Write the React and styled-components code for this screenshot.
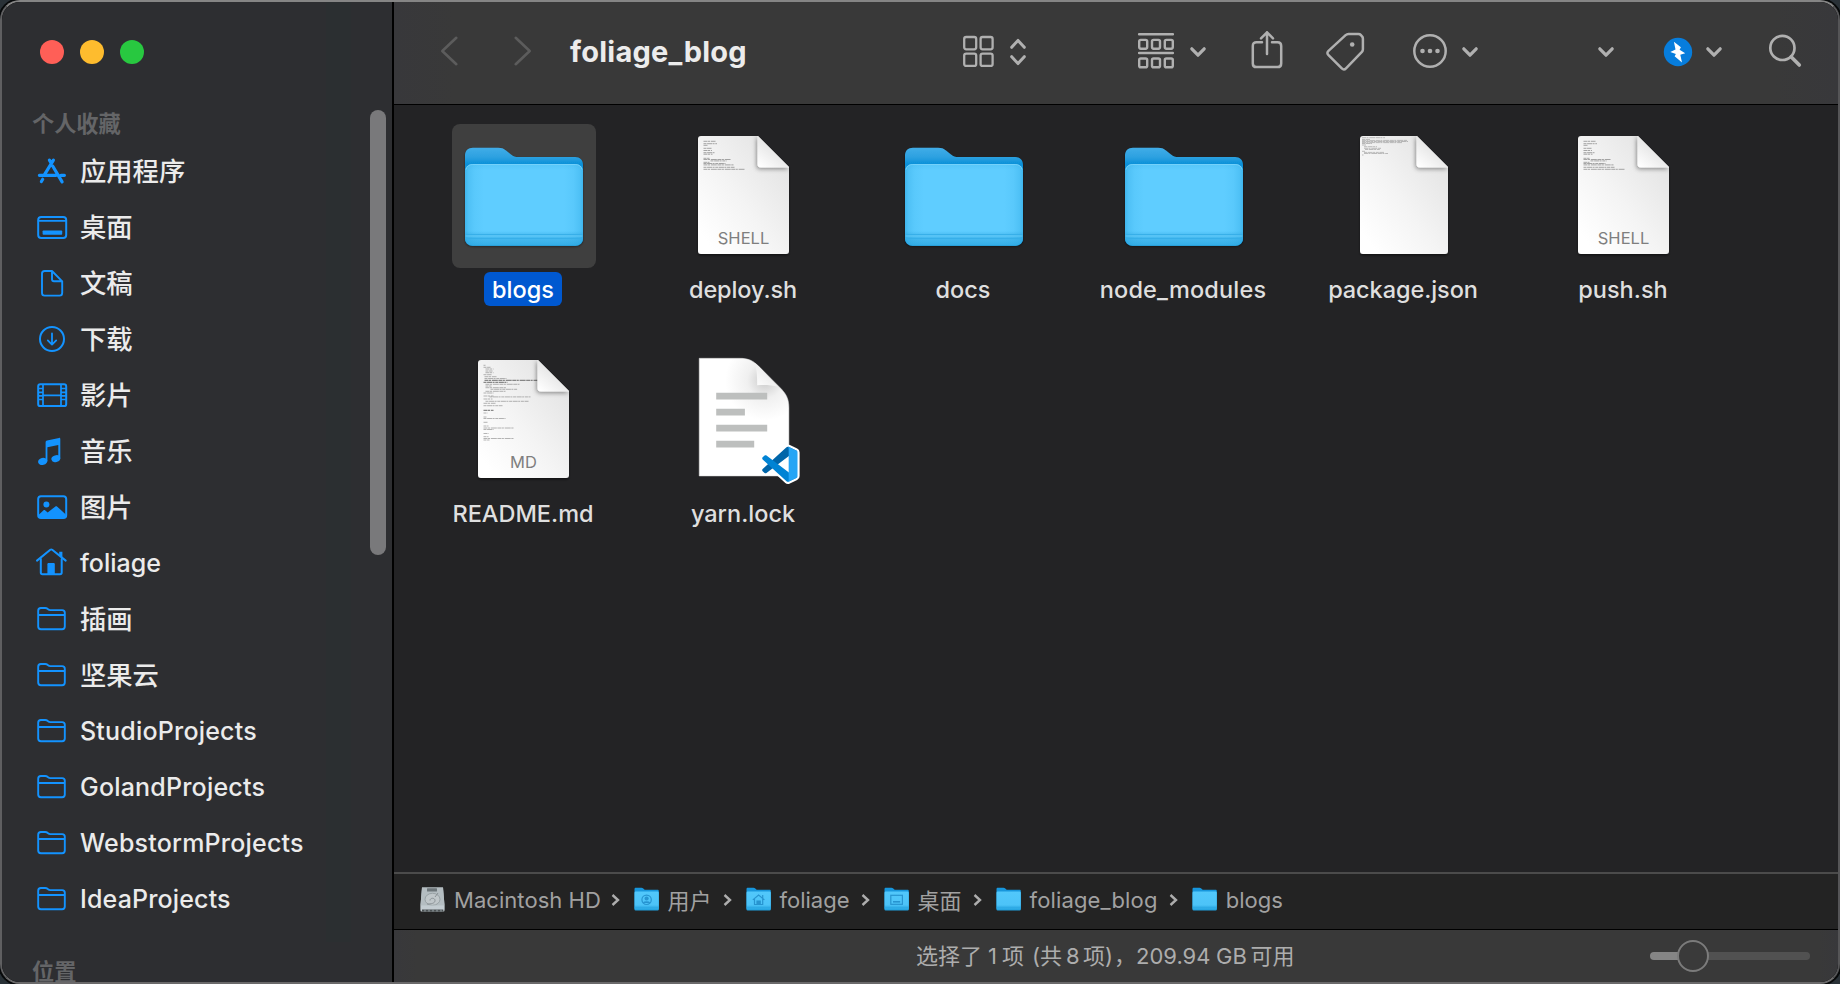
import React from "react";
import styled, { createGlobalStyle, css } from "styled-components";

const Global = createGlobalStyle`
  * { box-sizing: border-box; }
  body { margin: 0; background: #293137; overflow: hidden; }
`;

const Window = styled.div`
  width: 1840px;
  height: 984px;
  display: flex;
  overflow: hidden;
  border: 2px solid;
  border-color: #858585 #555557 #6a696a #5f5f61;
  border-radius: 20px;
  background: #000;
  box-shadow: 0 0 0 2px #07090a;
  font-family: Inter, "Noto Sans CJK SC", sans-serif;
  color: #ebebeb;
`;

/* ---------- sidebar ---------- */

const Sidebar = styled.aside`
  position: relative;
  flex: none;
  width: 390px;
  height: 980px;
  overflow: hidden;
  background: linear-gradient(#2b2f31, #2b2f31) 324px 0 / 25px 940px no-repeat, #2d2e31;
`;

const TrafficLights = styled.div`
  display: flex;
  gap: 16px;
  padding: 38px 0 0 38px;
  height: 104px;
`;

const Light = styled.span`
  width: 24px;
  height: 24px;
  border-radius: 50%;
  background: ${(p) => p.$color};
`;

const Heading = styled.div`
  height: 36px;
  line-height: 36px;
  padding-left: 30px;
  font-size: 22.2px;
  font-weight: 700;
  color: #646567;
`;

const SidebarList = styled.ul`
  list-style: none;
  margin: 0 0 27px;
  padding: 1px 0 0;
`;

const SidebarItem = styled.li`
  display: flex;
  align-items: center;
  gap: 12px;
  height: 56px;
  padding-left: 35px;
  font-size: 25px;
  font-weight: 500;
  letter-spacing: ${(p) => p.$ls || 0}px;
  color: #ebebeb;
  white-space: nowrap;

  svg { flex: none; overflow: visible; }
`;

const CjkText = styled.span`
  padding-bottom: 4px;
  font-size: 26.3px;
`;

const Scrollbar = styled.div`
  position: absolute;
  top: 108px;
  left: 368px;
  width: 16px;
  height: 445px;
  border-radius: 8px;
  background: #79797b;
`;

const BLUE = "#1393ff";

const SideSvg = ({ children }) => (
  <svg width="31" height="28" viewBox="0 0 31 28" fill="none" stroke={BLUE} strokeWidth="2" strokeLinecap="round" strokeLinejoin="round">
    {children}
  </svg>
);

const icons = {
  apps: (
    <SideSvg>
      <g strokeWidth="3.2">
        <path d="M16.4 3.2 7.2 18.2M12.4 3.2l1.5 2.4M15.8 9.3l9.3 15.6M2.4 18.3H19M24 18.3h3.4M4.4 24.5l1.3-2.2" />
      </g>
    </SideSvg>
  ),
  desktop: (
    <SideSvg>
      <rect x="1.2" y="4" width="28" height="21" rx="3" />
      <path d="M1.5 7.9h27.4" strokeWidth="1.6" />
      <rect x="5.6" y="17.5" width="19.6" height="4.3" rx="0.8" fill={BLUE} stroke="none" />
    </SideSvg>
  ),
  document: (
    <SideSvg>
      <path d="M15 2H7.6C6 2 5 3 5 4.6v19.4c0 1.6 1 2.6 2.6 2.6h15c1.6 0 2.6-1 2.6-2.6V12.3zM15 2v8.3c0 1.200.8 2 2 2h8.2" strokeWidth="1.9" />
    </SideSvg>
  ),
  download: (
    <SideSvg>
      <circle cx="15" cy="14" r="12" />
      <path d="M15 8.5v11M10.8 15.4 15 19.6l4.200-4.200" strokeWidth="1.8" />
    </SideSvg>
  ),
  film: (
    <SideSvg>
      <rect x="1.2" y="3.3" width="28" height="21.8" rx="2.2" />
      <path d="M6 3.5v21.400M24 3.5v21.400M6 14.3h18M1.2 7.5H6M1.2 11.3H6M1.2 14.8H6M1.2 18.5H6M24 7.5h5M24 11.3h5M24 14.8h5M24 18.5h5" strokeWidth="1.7" strokeLinecap="butt" />
    </SideSvg>
  ),
  music: (
    <SideSvg>
      <path d="M8.6 24.2V5.2c0-1 .5-1.6 1.5-1.8L22 .9c.8-.2 1.3.2 1.3 1v19.8h-2V8L10.4 10.3v13.9z" fill={BLUE} stroke="none" />
      <ellipse cx="5.7" cy="24.4" rx="4.7" ry="3.5" fill={BLUE} stroke="none" transform="rotate(-15 5.7 24.4)" />
      <ellipse cx="18.8" cy="21.7" rx="4.5" ry="3.4" fill={BLUE} stroke="none" transform="rotate(-15 18.8 21.7)" />
    </SideSvg>
  ),
  photo: (
    <SideSvg>
      <rect x="1.2" y="3.3" width="28" height="21.8" rx="2.8" />
      <circle cx="9.4" cy="11.4" r="3" fill={BLUE} stroke="none" />
      <path d="M2 21.5 6.3 17.5c.7-.6 1.3-.6 2 0l2.4 1.9 7.4-5.700c.8-.6 1.4-.6 2.200 0l8.500 7.800v3H2z" fill={BLUE} stroke="none" />
    </SideSvg>
  ),
  home: (
    <SideSvg>
      <path d="M0 11.6 13.3.8c.7-.5 1.2-.5 1.9 0L28.7 11.6" />
      <path d="M3.8 10v13.6c0 1 .7 1.7 1.7 1.7h17.500c1 0 1.7-.7 1.7-1.700V10" />
      <path d="M10.4 25.5V15.3c0-.7.5-1.2 1.2-1.200h5c.7 0 1.2.5 1.2 1.200v10.200z" fill={BLUE} stroke="none" />
      <path d="M22.2 2.7h3.200V9.300l-3.200-2.600z" fill={BLUE} stroke="none" />
    </SideSvg>
  ),
  folder: (
    <SideSvg>
      <path d="M1.2 21.5V5.7C1.2 4 2.2 3 3.9 3h4.3c1 0 1.6.2 2.3.8l.9.7c.6.5 1 .6 1.8.6h11.9c1.7 0 2.7 1 2.7 2.7v13.7c0 1.7-1 2.7-2.7 2.7H3.9c-1.7 0-2.7-1-2.7-2.7zM1.5 10h26.1" strokeWidth="1.9" />
    </SideSvg>
  ),
};

const favorites = [
  { icon: "apps", text: "应用程序", cjk: true },
  { icon: "desktop", text: "桌面", cjk: true },
  { icon: "document", text: "文稿", cjk: true },
  { icon: "download", text: "下载", cjk: true },
  { icon: "film", text: "影片", cjk: true },
  { icon: "music", text: "音乐", cjk: true },
  { icon: "photo", text: "图片", cjk: true },
  { icon: "home", text: "foliage" },
  { icon: "folder", text: "插画", cjk: true },
  { icon: "folder", text: "坚果云", cjk: true },
  { icon: "folder", text: "StudioProjects", ls: 0.2 },
  { icon: "folder", text: "GolandProjects", ls: 0.2 },
  { icon: "folder", text: "WebstormProjects", ls: 0.2 },
  { icon: "folder", text: "IdeaProjects", ls: 0.15 },
];

/* ---------- toolbar ---------- */

const Main = styled.main`
  display: flex;
  flex-direction: column;
  flex: 1;
  min-width: 0;
  margin-left: 2px;
`;

const Toolbar = styled.header`
  display: flex;
  align-items: center;
  flex: none;
  height: 102px;
  padding-bottom: 4px;
  background: linear-gradient(90deg, #38383b 0, #393939 60px, #393939 1380px, #38383b 1444px);

  svg { flex: none; overflow: visible; }
`;

const Title = styled.h1`
  margin: 0 0 0 38px;
  padding-top: 2px;
  width: 393px;
  font-size: 29px;
  font-weight: 700;
  line-height: 36px;
  letter-spacing: 0.25px;
  color: #ececec;
`;

const ToolSlot = styled.div`
  display: flex;
  margin-left: ${(p) => p.$gap}px;
`;

const ToolSvg = ({ w, h = 40, color = "#b0b0b0", sw = 2.5, children }) => (
  <svg width={w} height={h} viewBox={`0 0 ${w} ${h}`} fill="none" stroke={color} strokeWidth={sw} strokeLinecap="round" strokeLinejoin="round">
    {children}
  </svg>
);

const Chevron = () => (
  <ToolSvg w={16} sw={3.2}>
    <path d="M1.8 17.8 8 24.2l6.200-6.400" />
  </ToolSvg>
);

/* ---------- file grid ---------- */

const Content = styled.section`
  flex: none;
  height: 768px;
  border-top: 1px solid #000;
  padding: 19px 0 0 20px;
  display: grid;
  grid-template-columns: repeat(6, 220px);
  grid-auto-rows: 224px;
  background: #232325;
`;

const FileCell = styled.figure`
  margin: 0;
  display: flex;
  flex-direction: column;
  align-items: center;
`;

const Thumb = styled.div`
  width: 144px;
  height: 144px;
  border-radius: 8px;
  background: ${(p) => (p.$selected ? "#3f3f3f" : "transparent")};
  svg { display: block; overflow: visible; }
`;

const FileName = styled.figcaption`
  height: 34px;
  margin-top: 4px;
  margin-right: 2px;
  padding: 0 8px;
  line-height: 36px;
  border-radius: 6px;
  font-size: 23.5px;
  font-weight: 500;
  letter-spacing: ${(p) => p.$ls || 0}px;
  white-space: nowrap;
  color: #dfdfdf;
  ${(p) => p.$selected && css`background: #0058d0; color: #fff;`}
`;

const DocLabel = styled.text`
  font-family: Inter, sans-serif;
  font-size: 16.5px;
  fill: #7f7f7f;
`;

const FolderThumb = () => (
  <svg width="144" height="144" viewBox="0 0 144 144">
    <defs>
      <linearGradient id="fBack" x1="0" y1="0" x2="0" y2="1">
        <stop offset="0" stopColor="#41ade8" />
        <stop offset="0.1" stopColor="#2ba0e0" />
        <stop offset="0.17" stopColor="#0890d8" />
        <stop offset="1" stopColor="#0890d8" />
      </linearGradient>
      <linearGradient id="fFront" x1="0" y1="0" x2="0" y2="1">
        <stop offset="0" stopColor="#56c6f8" />
        <stop offset="0.08" stopColor="#5fcdff" />
        <stop offset="0.82" stopColor="#5fcdff" />
        <stop offset="0.86" stopColor="#4fc0f5" />
        <stop offset="1" stopColor="#34ade6" />
      </linearGradient>
      <linearGradient id="fSides" x1="0" y1="0" x2="1" y2="0">
        <stop offset="0" stopColor="#1f9edb" stopOpacity="0.5" />
        <stop offset="0.03" stopColor="#1f9edb" stopOpacity="0.25" />
        <stop offset="0.08" stopColor="#1f9edb" stopOpacity="0.09" />
        <stop offset="0.16" stopColor="#1f9edb" stopOpacity="0" />
        <stop offset="0.84" stopColor="#1f9edb" stopOpacity="0" />
        <stop offset="0.92" stopColor="#1f9edb" stopOpacity="0.09" />
        <stop offset="0.97" stopColor="#1f9edb" stopOpacity="0.25" />
        <stop offset="1" stopColor="#1f9edb" stopOpacity="0.5" />
      </linearGradient>
      <filter id="fShadow" x="-10%" y="-10%" width="120%" height="125%">
        <feDropShadow dx="0" dy="1" stdDeviation="1" floodColor="#000" floodOpacity="0.45" />
      </filter>
    </defs>
    <path filter="url(#fShadow)" fill="url(#fBack)" d="M13 114V32c0-5.500 3-8.300 8-8.300h25c3.500 0 5.500.7 8 2.800l5 4c2.500 2 4 2.500 7.500 2.500H123c5 0 8 3 8 8v73c0 5-3 7.700-8 7.700H21c-5 0-8-2.700-8-7.700z" />
    <rect x="13" y="40" width="118" height="81.7" rx="7.5" fill="url(#fFront)" />
    <rect x="13" y="40" width="118" height="81.7" rx="7.5" fill="url(#fSides)" />
    <path d="M14 45.500c.5-3 3-5 6.500-5h103c3.500 0 6 2 6.500 5" fill="none" stroke="#7bd4fb" strokeWidth="0.8" />
    <path d="M13.500 110.500h117M13.500 114.500h117" stroke="#36aee8" strokeWidth="0.9" />
    <path d="M13.500 112h117" stroke="#6fd0fa" strokeWidth="0.7" />
  </svg>
);

/* each line of the preview: [y, indent, length, dark] */
const shellLines = [
  [5.3, 0, 12], [7.7, 0, 13.5], [9.3, 0, 4], [12.3, 0, 8], [14.5, 0, 8.5], [16.7, 0, 11], [18.2, 0, 9],
  [22.3, 0, 6], [23.5, 0, 27], [24.9, 7, 16], [26.3, 0, 6], [27.5, 0, 22], [28.9, 0, 30], [31.3, 0, 31], [33.3, 0, 41],
];
const readmeLines = [
  [5.3, 0, 2], [7.3, 0, 7], [9, 2, 8], [11, 2, 7], [12.7, 2, 8], [14.7, 0, 8], [16.7, 1, 12], [18.5, 1, 22],
  [20.3, 1, 53, 1], [22.3, 0, 24, 1], [24.3, 2, 34], [26, 2, 6], [27.7, 2, 21], [29.3, 7, 27], [31.3, 2, 20], [33, 0, 10],
  [36, 0, 10], [36.9, 6, 41], [39, 0, 9], [41.3, 2, 43], [43.3, 0, 12], [45.7, 0, 19], [50.3, 0, 10, 1], [53, 0, 4],
  [57, 0, 3], [58.5, 0, 22], [62.3, 0, 4], [66, 0, 5], [68, 0, 30], [69.5, 0, 10], [73.5, 0, 5], [76.7, 0, 5], [78.5, 0, 30], [80, 0, 6],
];
const packageLines = [
  [1.7, 0, 23], [3.4, 0, 8], [4.4, 0, 45], [5.5, 0, 46], [6.6, 0, 40], [7.5, 0, 10], [9, 0, 4], [10.7, 2, 13],
  [12.3, 2, 17], [13.5, 3, 15], [15.3, 0, 3], [16.4, 2, 20], [17.5, 2, 24], [19, 0, 1.5],
];

const DocThumb = ({ x = 26, w = 91, label, lines, textX = 5.5, ink = 0.7 }) => {
  const id = `d${label || "plain"}`;
  const sheet = `M3 0H${w - 31}L${w} 31V115c0 2-1 3-3 3H3c-2 0-3-1-3-3V3C0 1 1 0 3 0z`;
  return (
    <svg width="144" height="144" viewBox="0 0 144 144">
      <defs>
        <linearGradient id={`${id}p`} x1="1" y1="0.2" x2="0.2" y2="1">
          <stop offset="0" stopColor="#e3e3e3" />
          <stop offset="0.55" stopColor="#f4f4f4" />
          <stop offset="1" stopColor="#ffffff" />
        </linearGradient>
        <linearGradient id={`${id}f`} x1="0.1" y1="1" x2="0.55" y2="0.45">
          <stop offset="0" stopColor="#ffffff" />
          <stop offset="1" stopColor="#e6e6e6" />
        </linearGradient>
        <filter id={`${id}s`} x="-30%" y="-30%" width="160%" height="160%">
          <feDropShadow dx="-1" dy="1.5" stdDeviation="2.2" floodColor="#000" floodOpacity="0.42" />
        </filter>
        <filter id={`${id}o`} x="-10%" y="-10%" width="120%" height="120%">
          <feDropShadow dx="0" dy="1.5" stdDeviation="1.2" floodColor="#000" floodOpacity="0.5" />
        </filter>
        <clipPath id={`${id}c`}>
          <path d={sheet} />
        </clipPath>
      </defs>
      <g transform={`translate(${x} 12)`}>
        <path filter={`url(#${id}o)`} fill={`url(#${id}p)`} d={sheet} />
        {lines.map(([y, indent, len, dark], i) => (
          <path key={i} d={`M${textX + indent} ${y}h${len}`} stroke={dark ? "#444" : "#6e6e6e"} strokeWidth="0.85" strokeOpacity={dark ? 0.9 : ink} strokeDasharray={i % 2 ? "3 .6 5 .5 2 .7" : "4 .5 2 .8 6 .6"} />
        ))}
        <g clipPath={`url(#${id}c)`}>
          <path filter={`url(#${id}s)`} fill={`url(#${id}f)`} d={`M${w - 31.5} -1V28c0 2.400 1 3.500 3.500 3.500H${w + 1}z`} />
        </g>
        {label && <DocLabel x={w / 2} y="108.3" textAnchor="middle">{label}</DocLabel>}
      </g>
    </svg>
  );
};

const VS_BACK = "M96.4614 10.7962L75.8569 0.875542C73.4719 -0.272773 70.6217 0.211611 68.75 2.08333L1.29858 63.5832C-0.515693 65.2373 -0.513607 68.0937 1.30308 69.7452L6.81272 74.754C8.29793 76.1042 10.5347 76.2036 12.1338 74.9905L93.3609 13.3699C96.086 11.3026 100 13.2462 100 16.6667V16.4275C100 14.0265 98.6246 11.8378 96.4614 10.7962Z";
const VS_MID = "M96.4614 89.2038L75.8569 99.1245C73.4719 100.273 70.6217 99.7884 68.75 97.9167L1.29858 36.4169C-0.515693 34.7627 -0.513607 31.9063 1.30308 30.2548L6.81272 25.246C8.29793 23.8958 10.5347 23.7964 12.1338 25.0095L93.3609 86.6301C96.086 88.6974 100 86.7538 100 83.3333V83.5725C100 85.9735 98.6246 88.1622 96.4614 89.2038Z";
const VS_FRONT = "M75.8578 99.1263C73.4721 100.274 70.6219 99.7885 68.75 97.9166C71.0564 100.223 75 98.5895 75 95.3278V4.67213C75 1.41039 71.0564 -0.223106 68.75 2.08329C70.6219 0.211402 73.4721 -0.273666 75.8578 0.873633L96.4587 10.7807C98.6234 11.8217 100 14.0112 100 16.4132V83.5871C100 85.9891 98.6234 88.1786 96.4587 89.2196L75.8578 99.1263Z";

const LockThumb = () => (
  <svg width="144" height="144" viewBox="0 0 144 144">
    <defs>
      <linearGradient id="lkFold" x1="0" y1="1" x2="0.6" y2="0.4">
        <stop offset="0" stopColor="#fff" />
        <stop offset="1" stopColor="#ececec" />
      </linearGradient>
      <radialGradient id="lkShade" gradientUnits="userSpaceOnUse" cx="66" cy="22" r="40">
        <stop offset="0" stopColor="#cacaca" />
        <stop offset="0.45" stopColor="#f0f0f0" />
        <stop offset="1" stopColor="#fff" />
      </radialGradient>
    </defs>
    <g transform="translate(27.2 10.3)">
      <path d="M0 0H40C50 0 54 2.500 60 8.500L80 28.500C87 35.500 89.700 40 89.700 50V117.700H0z" fill="url(#lkShade)" stroke="#d8d8d8" strokeWidth="0.5" />
      <path d="M55 4.500C57.500 10 58 16 58 27 66 26.500 73 27 79 28.500L60 8.500C58 6.500 57 5.500 55 4.500z" fill="url(#lkFold)" />
      <path d="M17 34.500h51v6.700H17zM17 50.500h28.700v6.700H17zM17 66.500h51v6.700H17zM17 82.500h38v6.700H17z" fill="#bdbfbe" />
      <g transform="translate(63 88.3) scale(.353)">
        <path d={VS_BACK + VS_MID + VS_FRONT} fill="#fff" stroke="#fff" strokeWidth="12" strokeLinejoin="round" />
        <path d="M74 26 43 50l31 24z" fill="#fff" />
        <path d={VS_BACK} fill="#0065a9" />
        <path d={VS_MID} fill="#0083d4" />
        <path d={VS_FRONT} fill="#25a5f5" />
      </g>
    </g>
  </svg>
);

const files = [
  { name: "blogs", thumb: <FolderThumb />, selected: true },
  { name: "deploy.sh", thumb: <DocThumb label="SHELL" lines={shellLines} />, ls: -0.1 },
  { name: "docs", thumb: <FolderThumb /> },
  { name: "node_modules", thumb: <FolderThumb />, ls: 0.18 },
  { name: "package.json", thumb: <DocThumb x={28} w={88} textX={2} lines={packageLines} ink={0.5} />, ls: -0.07 },
  { name: "push.sh", thumb: <DocThumb label="SHELL" lines={shellLines} /> },
  { name: "README.md", thumb: <DocThumb label="MD" lines={readmeLines} ink={0.6} /> },
  { name: "yarn.lock", thumb: <LockThumb /> },
];

/* ---------- path bar and status bar ---------- */

const PathBar = styled.nav`
  flex: none;
  display: flex;
  align-items: center;
  height: 57px;
  padding: 0 0 4px 26px;
  border-top: 2px solid #4b4b4b;
  background: #232323;
  font-size: 22px;
  color: #a1a1a1;
  svg { flex: none; }
`;

const PathStep = styled.span`
  display: flex;
  align-items: center;
  margin-right: 14px;
`;

const PathText = styled.span`
  width: ${(p) => p.$w}px;
  margin-left: 9px;
  padding-bottom: ${(p) => (p.$cjk ? 2 : 0)}px;
  letter-spacing: ${(p) => p.$ls || 0}px;
  white-space: nowrap;
`;

const PathArrow = () => (
  <svg width="9" height="14" viewBox="0 0 9 14" fill="none" stroke="#adadad" strokeWidth="2.4">
    <path d="M1.500 2 7 7l-5.500 5" />
  </svg>
);

const MARK = "#2794d0";

const MiniFolder = ({ mark }) => (
  <svg width="25" height="25" viewBox="0 0 25 25">
    <defs>
      <linearGradient id="mf" x1="0" y1="0" x2="0" y2="1">
        <stop offset="0" stopColor="#52c8fb" />
        <stop offset="0.7" stopColor="#4cc3f8" />
        <stop offset="1" stopColor="#1e9fdc" />
      </linearGradient>
    </defs>
    <path d="M.5 22V2.200C.5 1.300 1 .800 2 .800h5.500c.8 0 1.300.2 1.800.7l.8.800c.4.400.8.500 1.400.5h12c.9 0 1.300.5 1.300 1.400V22z" fill="#1796dc" />
    <rect x="0.5" y="4.5" width="24.3" height="19" rx="1.2" fill="url(#mf)" />
    <path d="M.7 20.300h24" stroke="#2ba6e2" strokeWidth="0.8" />
    {mark === "user" && (
      <g fill="none" stroke={MARK} strokeWidth="1.2">
        <circle cx="12.6" cy="12.8" r="4.7" />
        <circle cx="12.6" cy="11.5" r="1.5" fill={MARK} />
        <path d="M9.500 16c.8-1.500 5.400-1.500 6.200 0" fill={MARK} />
      </g>
    )}
    {mark === "home" && (
      <g fill="none" stroke={MARK} strokeWidth="1.2">
        <path d="M6.800 12.900 12.600 8l5.800 4.900M8.500 12v5.500h8.200V12M16.700 8v3" />
        <path d="M11 17.500V14h3.200v3.500z" fill={MARK} />
      </g>
    )}
    {mark === "desktop" && (
      <g fill="none" stroke={MARK} strokeWidth="1.2">
        <rect x="6.8" y="8.3" width="11.6" height="9" />
        <path d="M9 14.800h7.200" strokeWidth="1.6" />
      </g>
    )}
  </svg>
);

const DiskIcon = () => (
  <svg width="25" height="25" viewBox="0 0 25 25">
    <path d="M2 .500h21L24.500 18v5.500c0 .6-.4 1-1 1H1.500c-.6 0-1-.4-1-1V18z" fill="#b9c2c6" />
    <path d="M2 .500h21L24.500 18.500H.5z" fill="#b4bdc1" />
    <rect x="7" y="1.2" width="10" height="3.4" rx=".5" fill="#6d767a" />
    <ellipse cx="12.5" cy="12.3" rx="7.5" ry="6" fill="#c0c7ca" stroke="#8a9397" strokeWidth="0.7" />
    <path d="M10 13.500c0-3 5-3 5 0s-4 3.500-8 3.500M15 10l3-4" fill="none" stroke="#848c90" strokeWidth="0.9" />
    <path d="M.7 18.500h23.600v4.300H.7z" fill="#c3ccd1" />
    <path d="M2 22.500h21.300v2H2z" fill="#4a5052" />
    <path d="M5 22.500v2M9 22.500v2M13 22.500v2M17 22.500v2M21 22.500v2" stroke="#9ba6ab" strokeWidth="1" />
  </svg>
);

const steps = [
  { icon: <DiskIcon />, text: "Macintosh HD", w: 156.5, ls: 0.05 },
  { icon: <MiniFolder mark="user" />, text: "用户", w: 55, cjk: true },
  { icon: <MiniFolder mark="home" />, text: "foliage", w: 81 },
  { icon: <MiniFolder mark="desktop" />, text: "桌面", w: 55, cjk: true },
  { icon: <MiniFolder />, text: "foliage_blog", w: 139.2, ls: 0.15 },
  { icon: <MiniFolder />, text: "blogs", w: 60 },
];

const StatusBar = styled.footer`
  flex: 1;
  display: flex;
  align-items: center;
  border-top: 1px solid #000;
  padding: 0 28px 0 522px;
  background: linear-gradient(90deg, #38383b 0, #393939 24px, #393939 1425px, #38383b 1444px);
  color: #adadad;
  font-size: 22px;
`;

const StatusText = styled.div`
  display: flex;
  align-items: baseline;
  width: 734px;
  padding-bottom: 4px;
  white-space: nowrap;
`;

const StatusPart = styled.span`
  width: ${(p) => p.$w}px;
`;

const Slider = styled.div`
  display: flex;
  align-items: center;
  width: 160px;
  height: 8px;
  border-radius: 4px;
  background: linear-gradient(90deg, #858585 30px, #515151 30px);
`;

const Knob = styled.span`
  width: 32px;
  height: 32px;
  margin-left: 27px;
  border: 2px solid #7b7b7b;
  border-radius: 50%;
  background: #3a3a3a;
`;

export default function App() {
  return (
    <>
      <Global />
      <Window>
        <Sidebar>
          <TrafficLights>
            <Light $color="#ff5f57" />
            <Light $color="#febc2e" />
            <Light $color="#28c840" />
          </TrafficLights>
          <Heading>个人收藏</Heading>
          <SidebarList>
            {favorites.map((f) => (
              <SidebarItem key={f.text} $ls={f.ls}>
                {icons[f.icon]}
                {f.cjk ? <CjkText>{f.text}</CjkText> : <span>{f.text}</span>}
              </SidebarItem>
            ))}
          </SidebarList>
          <Heading>位置</Heading>
          <Scrollbar />
        </Sidebar>
        <Main>
          <Toolbar>
            <ToolSlot $gap={46}>
              <ToolSvg w={18} color="#5c5c5c" sw={2.6}><path d="M16.300 6.800 2.300 20l14 13.200" /></ToolSvg>
            </ToolSlot>
            <ToolSlot $gap={56}>
              <ToolSvg w={18} color="#5c5c5c" sw={2.6}><path d="M1.700 6.800 15.700 20l-14 13.200" /></ToolSvg>
            </ToolSlot>
            <Title>foliage_blog</Title>
            <ToolSlot $gap={0}>
              <ToolSvg w={31} sw={2.3}>
                <rect x="1.2" y="6" width="12" height="12.3" rx="2" />
                <rect x="17.6" y="6" width="12" height="12.3" rx="2" />
                <rect x="1.2" y="22.6" width="12" height="12.3" rx="2" />
                <rect x="17.6" y="22.6" width="12" height="12.3" rx="2" />
              </ToolSvg>
            </ToolSlot>
            <ToolSlot $gap={16}>
              <ToolSvg w={16} sw={3}><path d="M1.700 16.300 8 9.400l6.300 6.900M1.700 25.700 8 32.600l6.300-6.900" /></ToolSvg>
            </ToolSlot>
            <ToolSlot $gap={112}>
              <ToolSvg w={36} sw={2.4}>
                <path d="M1.200 3.300h33.600M1.200 22h33.600" strokeWidth="2.6" />
                {[8.9, 27.5].map((y) => [1.2, 14, 26.8].map((x) => (
                  <rect key={`${x}-${y}`} x={x} y={y} width="8" height="8.8" rx="1.6" />
                )))}
              </ToolSvg>
            </ToolSlot>
            <ToolSlot $gap={16}><Chevron /></ToolSlot>
            <ToolSlot $gap={45}>
              <ToolSvg w={32}>
                <path d="M11 11.200H5.500c-2.400 0-3.700 1.300-3.700 3.700v17.500c0 2.400 1.300 3.700 3.700 3.700h21c2.400 0 3.700-1.300 3.700-3.700V14.900c0-2.400-1.300-3.700-3.700-3.700H21M16 23V1.300M10 7.300l6-6 6 6" />
              </ToolSvg>
            </ToolSlot>
            <ToolSlot $gap={43}>
              <ToolSvg w={38}>
                <path d="M22.500 3h10c1 0 1.600.2 2.200.9l1.400 1.600c.6.600.8 1.300.8 2.200v10.500c0 1.100-.3 1.900-1 2.700L20 37.300c-1.500 1.600-2.700 1.600-4.200.1L2.500 24.200c-1.500-1.500-1.500-2.900 0-4.300L19.600 4.200c.9-.8 1.700-1.200 2.900-1.200z" />
                <circle cx="26.2" cy="13.5" r="2.3" fill="#b0b0b0" stroke="none" />
              </ToolSvg>
            </ToolSlot>
            <ToolSlot $gap={49}>
              <ToolSvg w={34}>
                <circle cx="17" cy="20" r="15.7" />
                <g fill="#b0b0b0" stroke="none">
                  <circle cx="9.5" cy="20" r="2.3" /><circle cx="17" cy="20" r="2.3" /><circle cx="24.5" cy="20" r="2.3" />
                </g>
              </ToolSvg>
            </ToolSlot>
            <ToolSlot $gap={15}><Chevron /></ToolSlot>
            <ToolSlot $gap={120}><Chevron /></ToolSlot>
            <ToolSlot $gap={49}>
              <ToolSvg w={30}>
                <circle cx="15" cy="21" r="14.2" fill="#077ddc" stroke="none" />
                <path d="M10.900 10.800 17.900 16.300 16.600 18.800 22.200 22.200 17.300 23.700 19 31.600 11.600 25.200 12.900 23 7.300 21 12.500 18.600z" fill="#fff" stroke="none" />
              </ToolSvg>
            </ToolSlot>
            <ToolSlot $gap={13}><Chevron /></ToolSlot>
            <ToolSlot $gap={47}>
              <ToolSvg w={33}>
                <circle cx="13.4" cy="16.9" r="12.1" strokeWidth="2.7" />
                <path d="M22.300 25.900 30.300 34" strokeWidth="3.6" />
              </ToolSvg>
            </ToolSlot>
          </Toolbar>
          <Content>
            {files.map((f) => (
              <FileCell key={f.name}>
                <Thumb $selected={f.selected}>{f.thumb}</Thumb>
                <FileName $selected={f.selected} $ls={f.ls}>{f.name}</FileName>
              </FileCell>
            ))}
          </Content>
          <PathBar>
            {steps.map((s, i) => (
              <PathStep key={s.text}>
                {s.icon}
                <PathText $w={s.w} $cjk={s.cjk} $ls={s.ls}>{s.text}</PathText>
                {i < steps.length - 1 && <PathArrow />}
              </PathStep>
            ))}
          </PathBar>
          <StatusBar>
            <StatusText>
              <StatusPart $w={72}>选择了</StatusPart>
              <StatusPart $w={14}>1</StatusPart>
              <StatusPart $w={30}>项</StatusPart>
              <StatusPart $w={8}>(</StatusPart>
              <StatusPart $w={26}>共</StatusPart>
              <StatusPart $w={17}>8</StatusPart>
              <StatusPart $w={22}>项</StatusPart>
              <StatusPart $w={9}>)</StatusPart>
              <StatusPart $w={22}>，</StatusPart>
              <StatusPart $w={80}>209.94</StatusPart>
              <StatusPart $w={34.5}>GB</StatusPart>
              <StatusPart $w={44}>可用</StatusPart>
            </StatusText>
            <Slider><Knob /></Slider>
          </StatusBar>
        </Main>
      </Window>
    </>
  );
}
